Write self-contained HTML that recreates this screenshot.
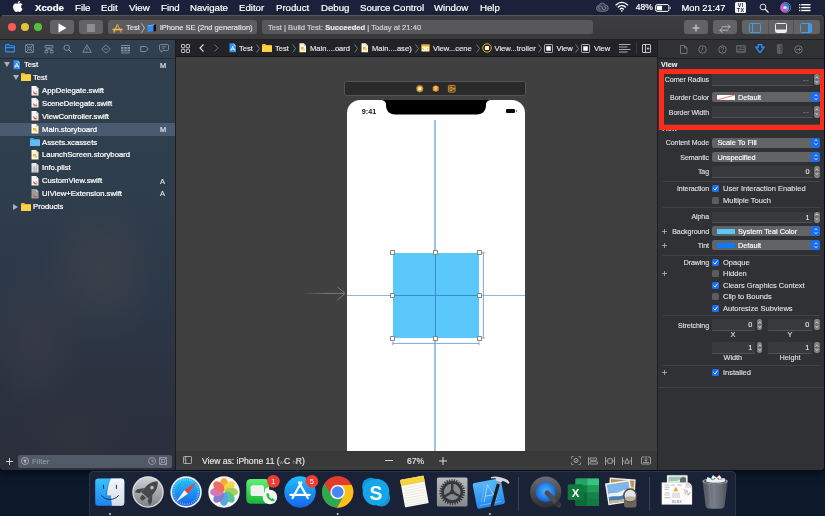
<!DOCTYPE html>
<html lang="en">
<head>
<meta charset="utf-8">
<title>Xcode - Main.storyboard</title>
<style>
*{box-sizing:border-box;margin:0;padding:0}
html,body{width:825px;height:516px;overflow:hidden;background:#0e1626}
body{font-family:"Liberation Sans",sans-serif;color:#e6e6e6;position:relative;-webkit-font-smoothing:antialiased}
.abs{position:absolute}
.t{position:absolute;white-space:nowrap;line-height:1}
svg{position:absolute;overflow:visible}

/* ---------- desktop ---------- */
#desktop{left:0;top:0;width:825px;height:516px;background:#0b192b}

/* ---------- menu bar ---------- */
#menubar{z-index:5;will-change:transform;left:0;top:0;width:825px;height:15px;background:#1b2138}
#menubar .t{top:2.700px;font-size:9.7px;color:#fff;letter-spacing:-.04px;-webkit-text-stroke:.2px #fff}
#menubar .b{font-weight:bold}

/* ---------- window ---------- */
#win{will-change:transform;left:0;top:15px;width:824.300px;height:454.500px;background:#3b3b3c;border-radius:4px 4px 4px 4px;overflow:hidden;box-shadow:0 2px 9px 2px rgba(0,0,0,.55)}
#toolbar{z-index:2;left:0;top:0;width:825px;height:24.500px;background:linear-gradient(180deg,#3e3e40 0%,#38383a 100%);border-top:1px solid #555557;border-bottom:1px solid #1f1f21}
.tbtn{position:absolute;top:4.200px;height:14.200px;border-radius:3px;background:#636365}
.tfield{position:absolute;top:4.200px;height:14.200px;border-radius:3px;background:#5a5a5c}
#toolbar .t{font-size:7.6px;color:#e6e6e6;top:8px;-webkit-text-stroke:.15px #e6e6e6}

/* ---------- navigator ---------- */
#nav{left:0;top:24px;width:175px;height:431px;background:
 radial-gradient(ellipse 62px 78px at 102px 229px,rgba(62,66,74,.8),rgba(62,66,74,0) 100%),
 radial-gradient(ellipse 52px 80px at 35px 295px,rgba(58,61,70,.7),rgba(58,61,70,0) 100%),
 radial-gradient(ellipse 60px 50px at 75px 395px,rgba(52,55,64,.5),rgba(52,55,64,0) 100%),
 linear-gradient(180deg,#30404f 0%,#2f3e4d 30%,#2c3848 60%,#2b313e 85%,#2a2f3b 100%)}
#nav .row{position:absolute;left:0;width:175px;height:13px}
#nav .t{font-size:7.7px;color:#fff;-webkit-text-stroke:.22px #fff}
#nav .st{font-size:7.4px;color:#dde0e5;left:160px;-webkit-text-stroke:.2px #dde0e5}
#navsel{left:0;top:84px;width:175px;height:13px;background:#4a5a70}

/* ---------- editor ---------- */
#div1{left:175px;top:24px;width:1px;height:431px;background:#1d1d1f}
#jump{left:176px;top:24px;width:481px;height:18px;background:#222326;border-bottom:1px solid #19191b}
#jump .t{font-size:7.6px;color:#e6e6e6;top:5.700px;-webkit-text-stroke:.15px #e6e6e6}
#canvas{left:176px;top:42px;width:481px;height:394px;background:#404040;overflow:hidden}
#cbar{left:176px;top:436px;width:481px;height:19.500px;background:#3a3a3b;border-top:1px solid #383839}
#cbar .t{font-size:8.550px;color:#e8e8e8;top:4.500px;-webkit-text-stroke:.15px #e8e8e8}

.hd{position:absolute;width:5px;height:5px;background:#fff;border:.7px solid #858585;border-radius:.8px}
/* ---------- inspector ---------- */
#div2{left:656.500px;top:24px;width:1.500px;height:431px;background:#1d1d1f}
#insp{left:658px;top:24px;width:167px;height:431px;background:#303134}
#insp .t{font-size:7.3px;color:#e4e4e4;-webkit-text-stroke:.1px #e4e4e4}
#insp .lab{text-align:right;width:100px;left:-49px;font-size:7px;letter-spacing:-.06px}
.sep{position:absolute;left:5px;width:157px;height:1px;background:#434447}
.fld{position:absolute;height:11.500px;background:#393a3d;border-bottom:1px solid #505154;border-radius:1px}
.stp{position:absolute;width:5.400px;height:11.300px;border-radius:2.700px;margin-left:.3px;background:linear-gradient(180deg,#8a8a8d 0%,#6c6c6f 50%,#8a8a8d 100%)}
.pop{position:absolute;left:54px;width:108px;height:10px;border-radius:2.5px;background:#626365;overflow:hidden}
.pop i{position:absolute;right:0;top:0;width:9px;height:10px;background:#1a6cf0}
.pop b{position:absolute;left:5px;top:2.5px;width:18px;height:5px}
.pop span{position:absolute;left:26px;top:1.5px;font-size:7.3px;color:#fff;white-space:nowrap;line-height:1;-webkit-text-stroke:.15px #fff}
.cb{position:absolute;left:54px;width:7px;height:7px;border-radius:1.5px;background:#5c5d60}
.cb.on{background:#1a6cf0}
#insp .cb + .t{font-size:7.500px}

/* ---------- dock ---------- */
#dock{left:88.500px;top:470.500px;width:647px;height:50px;background:#1a2237;border-radius:4px 4px 0 0;border:1px solid #2b3349}
</style>
</head>
<body>
<div id="desktop" class="abs"></div>

<!-- ================= MENU BAR ================= -->
<div id="menubar" class="abs">
 <svg style="left:12.500px;top:1px" width="9.500" height="11" viewBox="0 0 170 200"><path fill="#fff" d="M150.4 155.9c-3 7-6.600 13.400-10.800 19.300-5.700 8.100-10.300 13.700-13.900 16.800-5.600 5.100-11.500 7.700-17.900 7.900-4.600 0-10.100-1.300-16.500-3.900-6.400-2.600-12.300-3.900-17.700-3.900-5.700 0-11.800 1.300-18.300 3.900-6.500 2.600-11.800 4-15.800 4.100-6.100 0.300-12.200-2.400-18.300-8.100-3.900-3.400-8.700-9.200-14.500-17.400C0.500 165.700-4.600 155.200-8.600 143.200-12.900 130.200-15 117.700-15 105.500c0-13.900 3-25.900 9-36 4.700-8.100 11-14.400 18.900-19.100 7.900-4.700 16.400-7 25.500-7.200 5 0 11.600 1.500 19.800 4.600 8.100 3 13.400 4.600 15.600 4.600 1.700 0 7.500-1.800 17.300-5.400 9.300-3.300 17.100-4.700 23.500-4.200 17.400 1.400 30.400 8.200 39.100 20.600-15.500 9.400-23.200 22.600-23.100 39.500 0.100 13.200 4.900 24.100 14.300 32.800 4.200 4 9 7.100 14.200 9.300-1.100 3.300-2.300 6.400-3.600 9.400zM110.600 4c0 10.300-3.800 20-11.300 28.800-9.100 10.600-20 16.700-31.900 15.700-0.200-1.200-0.200-2.500-0.200-3.900 0-9.900 4.300-20.500 12-29.200 3.800-4.400 8.700-8 14.600-10.900 5.900-2.900 11.500-4.400 16.700-4.700 0.200 1.400 0.200 2.800 0.200 4.100z" transform="translate(15 0)"/></svg>
 <span class="t b" style="left:35px">Xcode</span>
 <span class="t" style="left:75px">File</span>
 <span class="t" style="left:101px">Edit</span>
 <span class="t" style="left:129px">View</span>
 <span class="t" style="left:161px">Find</span>
 <span class="t" style="left:190px">Navigate</span>
 <span class="t" style="left:239px">Editor</span>
 <span class="t" style="left:276px">Product</span>
 <span class="t" style="left:321px">Debug</span>
 <span class="t" style="left:360px">Source Control</span>
 <span class="t" style="left:434px">Window</span>
 <span class="t" style="left:480px">Help</span>
 <!-- right status items -->
 <svg style="left:596px;top:3.300px" width="12.500" height="9" viewBox="0 0 25 18"><path d="M7 16.500a6 6 0 0 1-1-11.900 7 7 0 0 1 12.500-1 6.500 6.500 0 0 1 .5 12.900z" fill="#3a3f55" stroke="#7a7e90" stroke-width="1.800"/><path d="M8.500 13a3.500 3.500 0 1 1 3-5.500M16 6.500a3.500 3.500 0 1 1-3 5.500M11.500 7.500c1.500 1.500 1.500 3.500 1.500 4.500" fill="none" stroke="#8b8fa0" stroke-width="1.600"/></svg>
 <svg style="left:614.800px;top:1.400px" width="13.600" height="10.800" viewBox="0 0 27.200 21.600"><g fill="none" stroke="#fff" stroke-width="2.700" stroke-linecap="round"><path d="M2 7.800c6.700-6.700 16.500-6.700 23.200 0"/><path d="M6.300 12.200c4.300-4.300 10.300-4.300 14.600 0"/><path d="M10.300 16.300c2-2 4.600-2 6.600 0"/></g><circle cx="13.600" cy="19.600" r="1.700" fill="#fff"/></svg>
 <span class="t" style="left:635.800px;font-size:8.500px;top:3.300px">48%</span>
 <svg style="left:654.600px;top:3.500px" width="16.500" height="8" viewBox="0 0 33 16"><rect x="1.200" y="1.200" width="26.600" height="13.600" rx="3.200" fill="none" stroke="#fff" stroke-width="2"/><rect x="3.600" y="3.600" width="10.500" height="8.800" rx="1" fill="#fff"/><path d="M29.800 5.500v5c2.300-.5 2.300-4.500 0-5z" fill="#fff"/></svg>
 <span class="t" style="left:681.500px;font-size:9.400px;top:2.900px">Mon 21:47</span>
 <div class="abs" style="left:735.300px;top:2px;width:10.600px;height:10.600px;background:#f4f4f6;border-radius:1.600px"></div>
 <span class="t" style="left:735.300px;width:10.600px;text-align:center;top:3px;font-size:5.400px;font-weight:bold;color:#1b2138;line-height:4.500px;letter-spacing:.3px;-webkit-text-stroke:0;white-space:normal">VI TX</span>
 <svg style="left:759px;top:2.500px" width="10" height="10" viewBox="0 0 20 20"><circle cx="8" cy="8" r="5.800" fill="none" stroke="#fff" stroke-width="1.700"/><path d="M12.500 12.500l6 6" stroke="#fff" stroke-width="2.200" stroke-linecap="round"/></svg>
 <div class="abs" style="left:779.500px;top:1.800px;width:11.400px;height:11.400px;border-radius:50%;background:#23233a;border:.7px solid #7c7f9a"></div><div class="abs" style="left:781px;top:3.300px;width:8.400px;height:8.400px;border-radius:50%;background:conic-gradient(from 200deg,#e93ec0,#f06ad0 15%,#8a5cf5 35%,#2f7cf6 55%,#26c6e8 75%,#c94fe0 92%,#e93ec0)"></div><div class="abs" style="left:783.400px;top:5.700px;width:3.600px;height:3.600px;border-radius:50%;background:radial-gradient(circle,#fff 0,rgba(255,255,255,.6) 50%,rgba(255,255,255,0) 100%)"></div>
 <svg style="left:798.500px;top:3.800px" width="11.500" height="7.400" viewBox="0 0 23 14.800"><g fill="#fff"><rect x="0" y="0" width="2.600" height="2.800"/><rect x="4.500" y="0" width="18.500" height="2.800"/><rect x="0" y="5.800" width="2.600" height="2.800"/><rect x="4.500" y="5.800" width="18.500" height="2.800"/><rect x="0" y="11.600" width="2.600" height="2.800"/><rect x="4.500" y="11.600" width="18.500" height="2.800"/></g></svg>
</div>

<!-- ================= XCODE WINDOW ================= -->
<div id="win" class="abs">
 <div id="toolbar" class="abs">
  <div class="abs" style="left:8.100px;top:7.300px;width:8px;height:8px;border-radius:50%;background:#fc5b57"></div>
  <div class="abs" style="left:21px;top:7.300px;width:8px;height:8px;border-radius:50%;background:#e5bf3c"></div>
  <div class="abs" style="left:34px;top:7.300px;width:8px;height:8px;border-radius:50%;background:#57c038"></div>
  <div class="tbtn" style="left:50px;width:24px"></div>
  <svg style="left:58px;top:7px" width="9" height="10" viewBox="0 0 9 10"><path d="M0.500 0.500L8.500 5L0.500 9.500z" fill="#fff"/></svg>
  <div class="tbtn" style="left:79px;width:24px"></div>
  <div class="abs" style="left:87px;top:8px;width:8px;height:8px;background:#8e8e90"></div>
  <div class="tfield" style="left:108px;width:149px;background:#5d5d5f"></div>
  <!-- app icon -->
  <svg style="left:112px;top:6.500px" width="11" height="11" viewBox="0 0 22 22"><g fill="none" stroke-linecap="round"><path d="M11 3L4 18" stroke="#e8a86a" stroke-width="2.600"/><path d="M11 3L18 18" stroke="#d98a4a" stroke-width="2.600"/><path d="M2 13h18" stroke="#f0c63a" stroke-width="2.800"/></g></svg>
  <span class="t" style="left:126px">Test</span>
  <svg style="left:141px;top:7px" width="4" height="10" viewBox="0 0 4 10"><path d="M0.500 0.500L3.500 5L0.500 9.500" fill="none" stroke="#d0d0d0" stroke-width=".8"/></svg>
  <!-- device icon -->
  <svg style="left:147px;top:7px" width="10" height="10" viewBox="0 0 20 20"><path d="M1 5l13-2v13l-13 2z" fill="#2f8df5"/><path d="M1 5l13-2 2 1-13 2z" fill="#7cc0ff"/><path d="M13 4l5-1v13l-5 1z" fill="#0d0d10"/></svg>
  <span class="t" style="left:160px;font-size:7.500px">iPhone SE (2nd generation)</span>
  <div class="tfield" style="left:262px;width:331px;background:#58585a"></div>
  <span class="t" style="left:268px;color:#c9c9c9">Test | Build Test: <b style="color:#f0f0f0">Succeeded</b> | Today at 21:40</span>
  <div class="tbtn" style="left:684px;width:24px"></div>
  <svg style="left:692px;top:8px" width="8" height="8" viewBox="0 0 8 8"><path d="M4 0.500v7M0.500 4h7" stroke="#e4e4e4" stroke-width="1" fill="none"/></svg>
  <div class="tbtn" style="left:713px;width:24px"></div>
  <svg style="left:719px;top:7.500px" width="12" height="9" viewBox="0 0 24 18"><g fill="none" stroke="#dadada" stroke-width="1.300" stroke-linecap="round" stroke-linejoin="round"><path d="M6 5.500h16M18 1.500l4 4-4 4"/><path d="M18 12.500H2M6 8.500l-4 4 4 4"/></g></svg>
  <div class="tbtn" style="left:742px;width:78px"></div>
  <div class="abs" style="left:767.5px;top:4.200px;width:1px;height:14.200px;background:#525254"></div>
  <div class="abs" style="left:793px;top:4.200px;width:1px;height:14.200px;background:#525254"></div>
  <svg style="left:749px;top:7px" width="12" height="10" viewBox="0 0 12 10"><rect x=".5" y=".5" width="11" height="9" rx="1" fill="none" stroke="#3aa0f5" stroke-width="1"/><path d="M3.500 .5v9" stroke="#3aa0f5" stroke-width="1"/></svg>
  <svg style="left:774.5px;top:7px" width="12" height="10" viewBox="0 0 12 10"><rect x=".5" y=".5" width="11" height="9" rx="1" fill="none" stroke="#ececec" stroke-width="1"/><rect x="1" y="6.500" width="10" height="2.500" fill="#ececec"/></svg>
  <svg style="left:800px;top:7px" width="12" height="10" viewBox="0 0 12 10"><rect x=".5" y=".5" width="11" height="9" rx="1" fill="none" stroke="#3aa0f5" stroke-width="1"/><path d="M8.500 .5v9" stroke="#3aa0f5" stroke-width="1"/><rect x="9" y="1" width="2.500" height="8" fill="#3aa0f5" opacity=".9"/></svg>
 </div>
 <div id="nav" class="abs">

  <!-- navigator tabs -->
  <svg style="left:4.800px;top:5.300px" width="10" height="8.600" viewBox="0 0 20 17.200"><path d="M1.300 2.500a1.200 1.200 0 0 1 1.200-1.200h5l1.800 2.200h8.200a1.200 1.200 0 0 1 1.200 1.200v10a1.200 1.200 0 0 1-1.200 1.200h-15a1.200 1.200 0 0 1-1.200-1.200z" fill="none" stroke="#2d8ef7" stroke-width="2.300"/><path d="M1.300 7.300h17.400" stroke="#2d8ef7" stroke-width="2.200"/></svg>
  <svg style="left:24.500px;top:5.200px" width="9" height="9" viewBox="0 0 18 18"><g fill="none" stroke="#8e99a6" stroke-width="1.500"><rect x="1" y="1" width="16" height="16" rx="1.500"/><rect x="6.200" y="6.200" width="5.600" height="5.600"/><path d="M1.500 1.500l4.700 4.700M16.500 1.500l-4.700 4.700M1.500 16.500l4.700-4.700M16.500 16.500l-4.700-4.700"/></g></svg>
  <svg style="left:43.500px;top:5.500px" width="10" height="8.400" viewBox="0 0 20 16.800"><g fill="none" stroke="#8e99a6" stroke-width="1.600"><rect x="2" y="1" width="16" height="4.800" rx=".6"/><rect x="2" y="11" width="5.400" height="4.800" rx=".4"/><rect x="12.600" y="11" width="5.400" height="4.800" rx=".4"/><path d="M4.700 11V8.300h10.600V11M10 5.800v2.500"/></g></svg>
  <svg style="left:62.500px;top:5.2px" width="9" height="9" viewBox="0 0 18 18"><circle cx="7.500" cy="7.500" r="5.500" fill="none" stroke="#8e99a6" stroke-width="1.700"/><path d="M11.500 11.500l5 5" stroke="#8e99a6" stroke-width="2" stroke-linecap="round"/></svg>
  <svg style="left:82px;top:5.2px" width="10" height="9" viewBox="0 0 20 18"><path d="M10 1.500L18.500 16.500h-17z" fill="none" stroke="#8e99a6" stroke-width="1.600" stroke-linejoin="round"/><path d="M10 7v5" stroke="#8e99a6" stroke-width="1.600"/><circle cx="10" cy="14" r="1" fill="#8e99a6"/></svg>
  <svg style="left:101px;top:4.7px" width="10" height="10" viewBox="0 0 20 20"><path d="M10 1.500L18.500 10 10 18.500 1.500 10z" fill="none" stroke="#8e99a6" stroke-width="1.600" stroke-linejoin="round"/><path d="M7 10h6" stroke="#8e99a6" stroke-width="1.600"/></svg>
  <svg style="left:120.500px;top:5.5px" width="9" height="8.500" viewBox="0 0 18 17"><g fill="#8e99a6"><rect x="0" y="0.300" width="18" height="1.700"/><rect x="0" y="4" width="5" height="3.600"/><rect x="6.500" y="4" width="5" height="3.600"/><rect x="13" y="4" width="5" height="3.600"/><rect x="0" y="9.200" width="5" height="3.600"/><rect x="6.500" y="9.200" width="5" height="3.600"/><rect x="13" y="9.200" width="5" height="3.600"/><rect x="0" y="15" width="18" height="1.700"/></g></svg>
  <svg style="left:140px;top:6.7px" width="9" height="6" viewBox="0 0 18 12"><path d="M1.500 1h10.500l4.500 5-4.500 5h-10.500z" fill="none" stroke="#8e99a6" stroke-width="1.700" stroke-linejoin="round"/></svg>
  <svg style="left:159px;top:5.2px" width="10" height="9" viewBox="0 0 20 18"><path d="M3 1h14a2 2 0 0 1 2 2v8a2 2 0 0 1-2 2h-9l-3.500 3.500v-3.500h-1.500a2 2 0 0 1-2-2v-8a2 2 0 0 1 2-2z" fill="none" stroke="#8e99a6" stroke-width="1.600" stroke-linejoin="round"/><path d="M5.500 5.500h9M5.500 8.500h6" stroke="#8e99a6" stroke-width="1.400"/></svg>
  <div class="abs" style="left:0;top:18.500px;width:175px;height:1px;background:rgba(20,26,34,.5)"></div>
  <div id="navsel" class="abs"></div>
  <svg style="left:3.5px;top:23.1px" width="6" height="5" viewBox="0 0 6 5"><path d="M0 0h6L3 5z" fill="#a9b0ba"/></svg>
  <svg style="left:13px;top:20.8px" width="7.500" height="9.500" viewBox="0 0 16 19"><path d="M1 0h9l5 5v14H1z" fill="#2f8ff5"/><path d="M10 0l5 5h-5z" fill="#9fd0ff"/><path d="M8 7l-3.500 8M8 7l3.500 8M4 12.500h8" stroke="#fff" stroke-width="1.600" fill="none" stroke-linecap="round"/></svg>
  <span class="t" style="left:24px;top:22.4px">Test</span>
  <span class="t st" style="top:22.6px">M</span>
  <svg style="left:12.5px;top:36.0px" width="6" height="5" viewBox="0 0 6 5"><path d="M0 0h6L3 5z" fill="#a9b0ba"/></svg>
  <svg style="left:20.5px;top:34.3px" width="10" height="8" viewBox="0 0 20 16"><path d="M0 1.500a1.500 1.500 0 0 1 1.500-1.500h5l2 2h10a1.500 1.500 0 0 1 1.500 1.500v11a1.500 1.500 0 0 1-1.500 1.500h-17a1.500 1.500 0 0 1-1.500-1.500z" fill="#f2b92b"/><rect x="0" y="4" width="20" height="12" rx="1.500" fill="#fbd244"/></svg>
  <span class="t" style="left:33px;top:35.3px">Test</span>
  <svg style="left:30.5px;top:46.5px" width="8" height="9.500" viewBox="0 0 16 19"><path d="M1 0h9l5 5v14H1z" fill="#f7f7f7"/><path d="M10 0l5 5h-5z" fill="#c9c9c9"/><path d="M4 9c2 3 5 5 8 6-1 1.500-4 2-7 .5 3 0 4-.5 4-.5C7 14 5 12 4 9z M8 9c2 1 4 3.500 4.500 7 .5-2 0-5-4.500-7z" fill="#e8432e"/><path d="M4.500 10.500c3 3.500 7 5 8.500 5.500-2 1.500-6 1-8-1.500z" fill="#f05138"/></svg>
  <span class="t" style="left:42px;top:48.3px">AppDelegate.swift</span>
  <svg style="left:30.5px;top:59.4px" width="8" height="9.500" viewBox="0 0 16 19"><path d="M1 0h9l5 5v14H1z" fill="#f7f7f7"/><path d="M10 0l5 5h-5z" fill="#c9c9c9"/><path d="M4 9c2 3 5 5 8 6-1 1.500-4 2-7 .5 3 0 4-.5 4-.5C7 14 5 12 4 9z M8 9c2 1 4 3.500 4.500 7 .5-2 0-5-4.500-7z" fill="#e8432e"/><path d="M4.500 10.500c3 3.500 7 5 8.500 5.500-2 1.500-6 1-8-1.500z" fill="#f05138"/></svg>
  <span class="t" style="left:42px;top:61.2px">SceneDelegate.swift</span>
  <svg style="left:30.5px;top:72.3px" width="8" height="9.500" viewBox="0 0 16 19"><path d="M1 0h9l5 5v14H1z" fill="#f7f7f7"/><path d="M10 0l5 5h-5z" fill="#c9c9c9"/><path d="M4 9c2 3 5 5 8 6-1 1.500-4 2-7 .5 3 0 4-.5 4-.5C7 14 5 12 4 9z M8 9c2 1 4 3.500 4.500 7 .5-2 0-5-4.500-7z" fill="#e8432e"/><path d="M4.500 10.500c3 3.500 7 5 8.500 5.500-2 1.500-6 1-8-1.500z" fill="#f05138"/></svg>
  <span class="t" style="left:42px;top:74.1px">ViewController.swift</span>
  <svg style="left:30.5px;top:85.2px" width="8" height="9.500" viewBox="0 0 16 19"><path d="M1 0h9l5 5v14H1z" fill="#fbf6e6"/><path d="M10 0l5 5h-5z" fill="#d9c98f"/><rect x="4" y="8" width="6" height="5" rx="1" fill="#e9b62c"/><rect x="7.500" y="11" width="5" height="4.500" rx="1" fill="#f5cf4f"/></svg>
  <span class="t" style="left:42px;top:87.0px">Main.storyboard</span>
  <span class="t st" style="top:87.2px">M</span>
  <svg style="left:29.5px;top:99.0px" width="10" height="8" viewBox="0 0 20 16"><path d="M0 1.500a1.500 1.500 0 0 1 1.500-1.500h5l2 2h10a1.500 1.500 0 0 1 1.500 1.500v11a1.500 1.500 0 0 1-1.500 1.500h-17a1.500 1.500 0 0 1-1.500-1.500z" fill="#3b9fe8"/><rect x="0" y="4" width="20" height="12" rx="1.500" fill="#62bdf7"/></svg>
  <span class="t" style="left:42px;top:99.55px">Assets.xcassets</span>
  <svg style="left:30.5px;top:111.1px" width="8" height="9.500" viewBox="0 0 16 19"><path d="M1 0h9l5 5v14H1z" fill="#fbf6e6"/><path d="M10 0l5 5h-5z" fill="#d9c98f"/><rect x="4" y="8" width="6" height="5" rx="1" fill="#e9b62c"/><rect x="7.500" y="11" width="5" height="4.500" rx="1" fill="#f5cf4f"/></svg>
  <span class="t" style="left:42px;top:112.45px">LaunchScreen.storyboard</span>
  <svg style="left:30.5px;top:124.0px" width="8" height="9.500" viewBox="0 0 16 19"><path d="M1 0h9l5 5v14H1z" fill="#e6e6e6"/><path d="M10 0l5 5h-5z" fill="#b9b9b9"/><path d="M3 8h10M3 11h10M3 14h10M3 17h10M6.500 7v11M10 7v11" stroke="#a5a5a5" stroke-width="1" fill="none"/></svg>
  <span class="t" style="left:42px;top:125.35px">Info.plist</span>
  <svg style="left:30.5px;top:137.0px" width="8" height="9.500" viewBox="0 0 16 19"><path d="M1 0h9l5 5v14H1z" fill="#f7f7f7"/><path d="M10 0l5 5h-5z" fill="#c9c9c9"/><path d="M4 9c2 3 5 5 8 6-1 1.500-4 2-7 .5 3 0 4-.5 4-.5C7 14 5 12 4 9z M8 9c2 1 4 3.500 4.500 7 .5-2 0-5-4.500-7z" fill="#e8432e"/><path d="M4.500 10.500c3 3.500 7 5 8.500 5.500-2 1.500-6 1-8-1.500z" fill="#f05138"/></svg>
  <span class="t" style="left:42px;top:138.35px">CustomView.swift</span>
  <span class="t st" style="top:138.55px">A</span>
  <svg style="left:30.5px;top:149.9px" width="8" height="9.500" viewBox="0 0 16 19"><path d="M1 0h9l5 5v14H1z" fill="#9c9c9c"/><path d="M10 0l5 5h-5z" fill="#c9c9c9"/><path d="M4.500 10.500c3 3.500 7 5 8.500 5.500-2 1.500-6 1-8-1.500z" fill="#e8432e"/></svg>
  <span class="t" style="left:42px;top:151.25px">UIView+Extension.swift</span>
  <span class="t st" style="top:151.45px">A</span>
  <svg style="left:13px;top:164.8px" width="5" height="6" viewBox="0 0 5 6"><path d="M0 0v6L5 3z" fill="#a9b0ba"/></svg>
  <svg style="left:20.5px;top:163.6px" width="10" height="8" viewBox="0 0 20 16"><path d="M0 1.500a1.500 1.500 0 0 1 1.500-1.500h5l2 2h10a1.500 1.500 0 0 1 1.500 1.500v11a1.500 1.500 0 0 1-1.500 1.500h-17a1.500 1.500 0 0 1-1.500-1.500z" fill="#f2b92b"/><rect x="0" y="4" width="20" height="12" rx="1.500" fill="#fbd244"/></svg>
  <span class="t" style="left:33px;top:164.15px">Products</span>
  <svg style="left:5.500px;top:419px" width="7" height="7" viewBox="0 0 7 7"><path d="M3.500 0v7M0 3.500h7" stroke="#e0e0e0" stroke-width=".9" fill="none"/></svg>
  <div class="abs" style="left:18px;top:415.500px;width:153.500px;height:13px;border-radius:2.500px;background:#535a67"></div>
  <svg style="left:21px;top:418px" width="8" height="8" viewBox="0 0 16 16"><circle cx="8" cy="8" r="7" fill="none" stroke="#c3c8d0" stroke-width="1.400"/><path d="M4 5.500h8L9 9v3.500l-2-1V9z" fill="#c3c8d0"/></svg>
  <span class="t" style="left:32px;top:418.500px;color:#98a0ac;font-size:7.800px;-webkit-text-stroke:0">Filter</span>
  <svg style="left:148px;top:418px" width="8" height="8" viewBox="0 0 16 16"><circle cx="8" cy="8" r="7" fill="none" stroke="#aab1bc" stroke-width="1.400"/><path d="M8 4v4.500h3.500" fill="none" stroke="#aab1bc" stroke-width="1.400"/></svg>
  <svg style="left:159px;top:418px" width="8" height="8" viewBox="0 0 16 16"><g fill="none" stroke="#aab1bc" stroke-width="1.400"><rect x="1" y="1" width="14" height="14" rx="1"/><rect x="5" y="5" width="6" height="6"/><path d="M1 1l4 4M15 1l-4 4M1 15l4-4M15 15l-4-4"/></g></svg>
 </div>
 <div id="div1" class="abs"></div>
 <div id="jump" class="abs">
  <svg style="left:4.500px;top:4.500px" width="9" height="9" viewBox="0 0 18 18"><g fill="none" stroke="#e2e2e2" stroke-width="1.700"><rect x="1" y="1" width="6.500" height="6.500" rx="1.200"/><rect x="10.500" y="1" width="6.500" height="6.500" rx="1.200"/><rect x="1" y="10.500" width="6.500" height="6.500" rx="1.200"/><rect x="10.500" y="10.500" width="6.500" height="6.500" rx="1.200"/></g></svg>
  <svg style="left:22.500px;top:5px" width="5" height="8" viewBox="0 0 5 8"><path d="M4.500 0.500L1 4l3.500 3.500" fill="none" stroke="#f0f0f0" stroke-width="1.100"/></svg>
  <svg style="left:37.500px;top:5px" width="5" height="8" viewBox="0 0 5 8"><path d="M0.500 0.500L4 4 0.500 7.500" fill="none" stroke="#6e6e70" stroke-width="1"/></svg>
  <svg style="left:52.5px;top:4.200px" width="7.500" height="9.500" viewBox="0 0 16 19"><path d="M1 0h9l5 5v14H1z" fill="#2f8ff5"/><path d="M10 0l5 5h-5z" fill="#9fd0ff"/><path d="M8 7l-3.500 8M8 7l3.500 8M4 12.500h8" stroke="#fff" stroke-width="1.600" fill="none" stroke-linecap="round"/></svg>
  <span class="t" style="left:63px">Test</span>
  <svg style="left:79.5px;top:4.500px" width="4" height="9" viewBox="0 0 4 9"><path d="M0.500 0.500L3.500 4.500L0.500 8.500" fill="none" stroke="#8c8c8e" stroke-width=".8"/></svg>
  <svg style="left:86px;top:5.200px" width="10" height="8" viewBox="0 0 20 16"><path d="M0 1.500a1.500 1.500 0 0 1 1.500-1.500h5l2 2h10a1.500 1.500 0 0 1 1.500 1.500v11a1.500 1.500 0 0 1-1.500 1.500h-17a1.500 1.500 0 0 1-1.500-1.500z" fill="#f2b92b"/><rect x="0" y="4" width="20" height="12" rx="1.500" fill="#fbd244"/></svg>
  <span class="t" style="left:99px">Test</span>
  <svg style="left:115.5px;top:4.500px" width="4" height="9" viewBox="0 0 4 9"><path d="M0.500 0.500L3.500 4.500L0.500 8.500" fill="none" stroke="#8c8c8e" stroke-width=".8"/></svg>
  <svg style="left:123px;top:4.200px" width="7.500" height="9.500" viewBox="0 0 16 19"><path d="M1 0h9l5 5v14H1z" fill="#fbf6e6"/><path d="M10 0l5 5h-5z" fill="#d9c98f"/><rect x="4" y="8" width="6" height="5" rx="1" fill="#e9b62c"/><rect x="7.500" y="11" width="5" height="4.500" rx="1" fill="#f5cf4f"/></svg>
  <span class="t" style="left:134px">Main....oard</span>
  <svg style="left:177.5px;top:4.500px" width="4" height="9" viewBox="0 0 4 9"><path d="M0.500 0.500L3.500 4.500L0.500 8.500" fill="none" stroke="#8c8c8e" stroke-width=".8"/></svg>
  <svg style="left:184.5px;top:4.200px" width="7.500" height="9.500" viewBox="0 0 16 19"><path d="M1 0h9l5 5v14H1z" fill="#fbf6e6"/><path d="M10 0l5 5h-5z" fill="#d9c98f"/><rect x="4" y="8" width="6" height="5" rx="1" fill="#e9b62c"/><rect x="7.500" y="11" width="5" height="4.500" rx="1" fill="#f5cf4f"/></svg>
  <span class="t" style="left:196px">Main....ase)</span>
  <svg style="left:238.5px;top:4.500px" width="4" height="9" viewBox="0 0 4 9"><path d="M0.500 0.500L3.500 4.500L0.500 8.500" fill="none" stroke="#8c8c8e" stroke-width=".8"/></svg>
  <svg style="left:245px;top:5px" width="9" height="8" viewBox="0 0 18 16"><rect x=".5" y=".5" width="17" height="15" rx="2" fill="#e8b030"/><rect x="2" y="5" width="14" height="9" rx="1" fill="#fdf6dc"/><path d="M6 7.500L4 9.500l2 2M12 7.500l2 2-2 2" stroke="#b07a10" stroke-width="1.200" fill="none"/></svg>
  <span class="t" style="left:257px">View...cene</span>
  <svg style="left:299.5px;top:4.500px" width="4" height="9" viewBox="0 0 4 9"><path d="M0.500 0.500L3.500 4.500L0.500 8.500" fill="none" stroke="#8c8c8e" stroke-width=".8"/></svg>
  <svg style="left:306px;top:4px" width="10" height="10" viewBox="0 0 20 20"><circle cx="10" cy="10" r="8.500" fill="#2b2413" stroke="#e6ad2c" stroke-width="2"/><rect x="6" y="6" width="8" height="8" rx="1" fill="#fdf8e8"/></svg>
  <span class="t" style="left:318.500px">View...troller</span>
  <svg style="left:361.5px;top:4.500px" width="4" height="9" viewBox="0 0 4 9"><path d="M0.500 0.500L3.500 4.500L0.500 8.500" fill="none" stroke="#8c8c8e" stroke-width=".8"/></svg>
  <svg style="left:367.500px;top:4.500px" width="9" height="9" viewBox="0 0 18 18"><rect x="1" y="1" width="16" height="16" rx="1.500" fill="none" stroke="#d8d8d8" stroke-width="1.500"/><rect x="4.500" y="4.500" width="9" height="9" fill="#fff"/></svg>
  <span class="t" style="left:380.500px">View</span>
  <svg style="left:399px;top:4.500px" width="4" height="9" viewBox="0 0 4 9"><path d="M0.500 0.500L3.500 4.500L0.500 8.500" fill="none" stroke="#8c8c8e" stroke-width=".8"/></svg>
  <svg style="left:405px;top:4.500px" width="9" height="9" viewBox="0 0 18 18"><rect x="1" y="1" width="16" height="16" rx="1.500" fill="none" stroke="#d8d8d8" stroke-width="1.500"/><rect x="4.500" y="4.500" width="9" height="9" fill="#fff"/></svg>
  <span class="t" style="left:418px">View</span>
  <svg style="left:442.700px;top:5.300px" width="11.500" height="8.600" viewBox="0 0 23 17.200"><path d="M0 1h23M0 6h17M0 11h23M0 16h17" stroke="#bdbdbf" stroke-width="1.800"/></svg>
  <div class="abs" style="left:460px;top:3px;width:1px;height:12px;background:#3b3b3e"></div>
  <svg style="left:466px;top:4.500px" width="9" height="9" viewBox="0 0 18 18"><rect x="1" y="1" width="16" height="16" rx="1" fill="none" stroke="#e2e2e2" stroke-width="1.700"/><path d="M7 1v16" stroke="#e2e2e2" stroke-width="1.700"/><path d="M10 9h5M13 6.500l-3 2.500 3 2.500" fill="none" stroke="#e2e2e2" stroke-width="1.500"/></svg>
 </div>
 <div id="canvas" class="abs">
  <!-- scene dock strip -->
  <div class="abs" style="left:168.300px;top:24px;width:181.700px;height:15px;background:#2a2a2b;border:1px solid #545455;border-radius:2.500px"></div>
  <svg style="left:240px;top:28px" width="7.500" height="7.500" viewBox="0 0 15 15"><circle cx="7.500" cy="7.500" r="6.800" fill="#d9a12f" stroke="#8a6a24" stroke-width="1"/><rect x="4.600" y="4.600" width="5.800" height="5.800" fill="#fffaf0"/></svg>
  <svg style="left:256px;top:28px" width="7.500" height="7.500" viewBox="0 0 15 15"><path d="M7.500 .8l6 3v7.400l-6 3-6-3V3.800z" fill="#e08a2c"/><path d="M7.500 .8l6 3-6 3-6-3z" fill="#f4b55c"/><path d="M5 6.500h4v4H5z" fill="#ffe2b0" opacity=".8"/></svg>
  <svg style="left:272px;top:28px" width="7.500" height="7.500" viewBox="0 0 15 15"><rect x=".8" y=".8" width="13.400" height="13.400" rx="1.500" fill="#5a3d10" stroke="#e39a2e" stroke-width="1.600"/><path d="M4 4h4v7H4zM9.500 7.500h3M11 5.500l2 2-2 2" fill="none" stroke="#ffd48a" stroke-width="1.300"/></svg>
  <!-- phone -->
  <div class="abs" style="left:171px;top:43px;width:178px;height:420px;background:#fff;border-radius:13px 13px 0 0"></div>
  <svg style="left:203.500px;top:43px" width="112" height="16" viewBox="0 0 112 16"><path d="M0 0h112c-4 0-6 1.500-6 5v.5c0 5-3.500 9-9 9h-82c-5.500 0-9-4-9-9V5c0-3.500-2-5-6-5z" fill="#000"/></svg>
  <span class="t" style="left:185.800px;top:50.600px;font-size:7.200px;font-weight:bold;color:#111;-webkit-text-stroke:0">9:41</span>
  <div class="abs" style="left:330px;top:52px;width:9px;height:4px;background:#0a0a0a;border-radius:1px"></div>
  <div class="abs" style="left:340px;top:53.200px;width:1px;height:1.600px;background:#777"></div>
  <!-- guides -->
  <div class="abs" style="left:258.200px;top:63px;width:1.500px;height:340px;background:#a0c1e4"></div>
  <div class="abs" style="left:171px;top:238px;width:178px;height:1px;background:#8db6e3"></div>
  <!-- the teal view -->
  <div class="abs" style="left:216.800px;top:195.500px;width:86.200px;height:85.500px;background:#5ac8fa"></div>
  <div class="abs" style="left:258.500px;top:195.500px;width:1px;height:85.500px;background:#3b8ccb"></div>
  <div class="abs" style="left:216.800px;top:238px;width:86.200px;height:1px;background:#3b8ccb"></div>
  <!-- dimension brackets -->
  <svg style="left:0;top:0" width="481" height="395" viewBox="0 0 481 395"><g fill="none" stroke="#6c9fd6" stroke-width=".9"><path d="M307.400 195.800V281M305.600 195.800h3.600M305.600 281h3.600"/><path d="M216.800 286.400h86.200M216.800 284.600v3.600M303 284.600v3.600"/></g>
   <defs><linearGradient id="ag" x1="0" x2="1" y1="0" y2="0"><stop offset="0" stop-color="#7a7a7a" stop-opacity="0"/><stop offset=".55" stop-color="#7a7a7a" stop-opacity=".9"/><stop offset="1" stop-color="#7e7e7e"/></linearGradient></defs>
   <rect x="126" y="235.900" width="43" height="1" fill="url(#ag)" stroke="none"/>
   <path d="M161.500 229.900l7.500 6.500-7.500 6.500" fill="none" stroke="#7c7c7c" stroke-width="1"/>
  </svg>
  <div class="hd" style="left:214.3px;top:193.0px"></div><div class="hd" style="left:256.8px;top:193.0px"></div><div class="hd" style="left:300.5px;top:193.0px"></div><div class="hd" style="left:214.3px;top:235.89999999999998px"></div><div class="hd" style="left:300.5px;top:235.89999999999998px"></div><div class="hd" style="left:214.3px;top:278.5px"></div><div class="hd" style="left:256.8px;top:278.5px"></div><div class="hd" style="left:300.5px;top:278.5px"></div>
 </div>
 <div id="cbar" class="abs">
  <svg style="left:6.500px;top:4px" width="9" height="8" viewBox="0 0 18 16"><rect x="1" y="1" width="16" height="14" rx="1.500" fill="none" stroke="#cfcfcf" stroke-width="1.500"/><path d="M5.500 1v14" stroke="#cfcfcf" stroke-width="1.500"/><path d="M2.500 4h1.500M2.500 7h1.500" stroke="#cfcfcf" stroke-width="1"/></svg>
  <span class="t" style="left:26px">View as: iPhone 11 (<span style="font-size:6px;color:#9a9a9a;-webkit-text-stroke:0">w</span>C <span style="font-size:6px;color:#9a9a9a;-webkit-text-stroke:0">h</span>R)</span>
  <div class="abs" style="left:209px;top:8px;width:8px;height:1px;background:#d4d4d4"></div>
  <span class="t" style="left:231px">67%</span>
  <svg style="left:263px;top:4.500px" width="8" height="8" viewBox="0 0 8 8"><path d="M4 0v8M0 4h8" stroke="#d8d8d8" stroke-width="1" fill="none"/></svg>
  <svg style="left:395px;top:4px" width="10" height="9" viewBox="0 0 20 18"><g fill="none" stroke="#bdbdbd" stroke-width="1.500"><path d="M1 5V2.500a1.500 1.500 0 0 1 1.500-1.500H5M15 1h2.500a1.500 1.500 0 0 1 1.500 1.500V5M19 13v2.500a1.500 1.500 0 0 1-1.500 1.500H15M5 17H2.500a1.500 1.500 0 0 1-1.500-1.500V13"/><circle cx="10" cy="9" r="4.200"/><path d="M8 9.500l1.500 1.500 2.500-3"/></g></svg>
  <svg style="left:412px;top:4.500px" width="10" height="8" viewBox="0 0 20 16"><g fill="none" stroke="#bdbdbd" stroke-width="1.500"><path d="M1 0v16"/><rect x="4" y="2" width="13" height="4.500" rx=".8"/><rect x="4" y="9.500" width="15" height="4.500" rx=".8"/></g></svg>
  <svg style="left:428.500px;top:4.500px" width="10" height="8" viewBox="0 0 20 16"><g fill="none" stroke="#bdbdbd" stroke-width="1.500"><path d="M1 0v16M19 0v16M1 8h4M15 8h4"/><rect x="5.500" y="3.500" width="9" height="9" rx=".8"/></g></svg>
  <svg style="left:445.500px;top:4.500px" width="10" height="8" viewBox="0 0 20 16"><g fill="none" stroke="#bdbdbd" stroke-width="1.500"><path d="M1 0v16M19 0v16M1 8h4M15 8h4"/><path d="M10 3l4.500 9.500h-9z" stroke-linejoin="round"/></g></svg>
  <svg style="left:465px;top:4px" width="10" height="9" viewBox="0 0 20 18"><g fill="none" stroke="#bdbdbd" stroke-width="1.500"><path d="M7 2H2.500A1.500 1.500 0 0 0 1 3.500v11A1.500 1.500 0 0 0 2.500 16h15a1.500 1.500 0 0 0 1.500-1.500v-11A1.500 1.500 0 0 0 17.500 2H13"/><path d="M10 0v10M6.500 7l3.500 3.500L13.500 7"/><path d="M4 13h12"/></g></svg>
 </div>
 <div id="div2" class="abs"></div>
 <div id="insp" class="abs">

  <!-- inspector tabs -->
  <svg style="left:22px;top:5.6px" width="7.500" height="9" viewBox="0 0 15 18"><path d="M1 1h8l5 5v11H1z" fill="none" stroke="#8a8a8d" stroke-width="1.500" stroke-linejoin="round"/><path d="M9 1v5h5" fill="none" stroke="#8a8a8d" stroke-width="1.500"/></svg>
  <svg style="left:40px;top:5.6px" width="9" height="9" viewBox="0 0 18 18"><circle cx="9" cy="9" r="7.500" fill="none" stroke="#8a8a8d" stroke-width="1.500"/><path d="M9 4.500V9.500L6.500 11.500" fill="none" stroke="#8a8a8d" stroke-width="1.500"/></svg>
  <svg style="left:59.500px;top:5.6px" width="9" height="9" viewBox="0 0 18 18"><circle cx="9" cy="9" r="7.500" fill="none" stroke="#8a8a8d" stroke-width="1.500"/><path d="M6.500 7a2.500 2.500 0 1 1 3.500 2.300c-.8.400-1 .9-1 1.700" fill="none" stroke="#8a8a8d" stroke-width="1.400"/><circle cx="9" cy="13.300" r=".9" fill="#8a8a8d"/></svg>
  <svg style="left:78px;top:6.1px" width="10" height="8" viewBox="0 0 20 16"><rect x=".8" y=".8" width="18.400" height="14.400" rx="1.500" fill="#5e5e61" stroke="#6a6a6d" stroke-width="1.200"/><rect x="3" y="3.500" width="5" height="4" fill="#2c2d30"/><path d="M10 4h7M10 7h7M3 11h14" stroke="#2c2d30" stroke-width="1.400"/></svg>
  <svg style="left:97px;top:5.1px" width="10" height="10" viewBox="0 0 20 20"><path d="M6.500 1.500h7v5h5l-8.500 10.500-8.500-10.500h5z" fill="none" stroke="#2a8cf7" stroke-width="2.600" stroke-linejoin="round"/></svg>
  <svg style="left:119px;top:5.1px" width="5.500" height="10" viewBox="0 0 11 20"><rect x=".8" y=".8" width="9.400" height="18.400" rx="1" fill="#5e5e61" stroke="#6a6a6d" stroke-width="1.200"/><path d="M6 4h4M6 7.500h4M6 11h4M6 14.500h4" stroke="#2c2d30" stroke-width="1.200"/></svg>
  <svg style="left:136px;top:5.6px" width="9" height="9" viewBox="0 0 18 18"><circle cx="9" cy="9" r="7.500" fill="none" stroke="#8a8a8d" stroke-width="1.500"/><path d="M4.500 9h8.500M10 6l3 3-3 3" fill="none" stroke="#8a8a8d" stroke-width="1.500"/></svg>
  <div class="abs" style="left:0;top:18.500px;width:167px;height:1px;background:#1e1f21"></div>
  <span class="t" style="left:3px;top:21.800px;font-weight:bold;font-size:7.200px;color:#f2f2f2">View</span>
  <span class="t" style="left:3px;top:85.800px;font-weight:bold;font-size:7.200px;color:#b8b8ba">View</span>
  <span class="t lab" style="top:37px">Corner Radius</span><div class="fld" style="left:54px;top:35px;width:100.5px"><span class="t" style="right:3px;top:2px;color:#7d7e82;letter-spacing:.8px">--</span></div><div class="stp" style="left:156px;top:35px"><svg style="left:.9px;top:1.800px" width="3.600" height="7.400" viewBox="0 0 36 74"><path d="M4 26L18 8l14 18M4 48l14 18 14-18" fill="none" stroke="#e9e9e9" stroke-width="8"/></svg></div>
  <span class="t lab" style="top:54.5px">Border Color</span><div class="pop" style="top:53px;height:10px"><b style="background:#fff"><svg style="left:0;top:0" width="18" height="5" viewBox="0 0 18 5"><path d="M0 5L18 0" stroke="#f03a30" stroke-width=".7"/></svg></b><span>Default</span><i><svg style="left:2.500px;top:1.800px" width="4" height="6.400" viewBox="0 0 40 64"><path d="M5 22L20 6l15 16M5 42l15 16 15-16" fill="none" stroke="#fff" stroke-width="8"/></svg></i></div>
  <span class="t lab" style="top:69.5px">Border Width</span><div class="fld" style="left:54px;top:67.3px;width:100.5px"><span class="t" style="right:3px;top:2px;color:#7d7e82;letter-spacing:.8px">--</span></div><div class="stp" style="left:156px;top:67.3px"><svg style="left:.9px;top:1.800px" width="3.600" height="7.400" viewBox="0 0 36 74"><path d="M4 26L18 8l14 18M4 48l14 18 14-18" fill="none" stroke="#e9e9e9" stroke-width="8"/></svg></div>
  <div class="sep" style="top:84.5px"></div>
  <div class="abs" style="left:1px;top:30px;width:166.300px;height:60.500px;border:5px solid #fc2b1c"></div>
  <span class="t lab" style="top:100px">Content Mode</span><div class="pop" style="top:98.5px;height:10px"><span style="left:5.500px">Scale To Fill</span><i><svg style="left:2.500px;top:1.800px" width="4" height="6.400" viewBox="0 0 40 64"><path d="M5 22L20 6l15 16M5 42l15 16 15-16" fill="none" stroke="#fff" stroke-width="8"/></svg></i></div>
  <span class="t lab" style="top:114.5px">Semantic</span><div class="pop" style="top:113px;height:10px"><span style="left:5.500px">Unspecified</span><i><svg style="left:2.500px;top:1.800px" width="4" height="6.400" viewBox="0 0 40 64"><path d="M5 22L20 6l15 16M5 42l15 16 15-16" fill="none" stroke="#fff" stroke-width="8"/></svg></i></div>
  <span class="t lab" style="top:129px">Tag</span><div class="fld" style="left:54px;top:127.4px;width:100.5px"><span class="t" style="right:3px;top:2px;color:#f0f0f0">0</span></div><div class="stp" style="left:156px;top:127.4px"><svg style="left:.9px;top:1.800px" width="3.600" height="7.400" viewBox="0 0 36 74"><path d="M4 26L18 8l14 18M4 48l14 18 14-18" fill="none" stroke="#e9e9e9" stroke-width="8"/></svg></div>
  <div class="sep" style="top:142px"></div>
  <span class="t lab" style="top:146.2px">Interaction</span><div class="cb on" style="top:146px"><svg style="left:1px;top:1px" width="5.200" height="5.200" viewBox="0 0 52 52"><path d="M8 28l12 13L44 9" fill="none" stroke="#fff" stroke-width="9" stroke-linecap="round" stroke-linejoin="round"/></svg></div><span class="t" style="left:65px;top:146.2px">User Interaction Enabled</span>
  <div class="cb" style="top:157.7px"></div><span class="t" style="left:65px;top:157.89999999999998px">Multiple Touch</span>
  <div class="sep" style="top:168.3px"></div>
  <span class="t lab" style="top:174.2px">Alpha</span><div class="fld" style="left:54px;top:172.6px;width:100.5px"><span class="t" style="right:3px;top:2px;color:#f0f0f0">1</span></div><div class="stp" style="left:156px;top:172.6px"><svg style="left:.9px;top:1.800px" width="3.600" height="7.400" viewBox="0 0 36 74"><path d="M4 26L18 8l14 18M4 48l14 18 14-18" fill="none" stroke="#e9e9e9" stroke-width="8"/></svg></div>
  <svg style="left:3.500px;top:189.5px" width="5" height="5" viewBox="0 0 5 5"><path d="M2.500 0v5M0 2.500h5" stroke="#b5b5b8" stroke-width=".8" fill="none"/></svg><span class="t lab" style="top:188.6px">Background</span><div class="pop" style="top:187.3px;height:9.5px"><b style="background:#5ac8fa"></b><span>System Teal Color</span><i><svg style="left:2.500px;top:1.800px" width="4" height="6.400" viewBox="0 0 40 64"><path d="M5 22L20 6l15 16M5 42l15 16 15-16" fill="none" stroke="#fff" stroke-width="8"/></svg></i></div>
  <svg style="left:3.500px;top:203.5px" width="5" height="5" viewBox="0 0 5 5"><path d="M2.500 0v5M0 2.500h5" stroke="#b5b5b8" stroke-width=".8" fill="none"/></svg><span class="t lab" style="top:202.6px">Tint</span><div class="pop" style="top:201.3px;height:9.5px"><b style="background:#0a7aff"></b><span>Default</span><i><svg style="left:2.500px;top:1.800px" width="4" height="6.400" viewBox="0 0 40 64"><path d="M5 22L20 6l15 16M5 42l15 16 15-16" fill="none" stroke="#fff" stroke-width="8"/></svg></i></div>
  <div class="sep" style="top:215.5px"></div>
  <span class="t lab" style="top:220px">Drawing</span><div class="cb on" style="top:219.7px"><svg style="left:1px;top:1px" width="5.200" height="5.200" viewBox="0 0 52 52"><path d="M8 28l12 13L44 9" fill="none" stroke="#fff" stroke-width="9" stroke-linecap="round" stroke-linejoin="round"/></svg></div><span class="t" style="left:65px;top:219.89999999999998px">Opaque</span>
  <svg style="left:3.500px;top:232px" width="5" height="5" viewBox="0 0 5 5"><path d="M2.500 0v5M0 2.500h5" stroke="#b5b5b8" stroke-width=".8" fill="none"/></svg><div class="cb" style="top:231.1px"></div><span class="t" style="left:65px;top:231.29999999999998px">Hidden</span>
  <div class="cb on" style="top:242.7px"><svg style="left:1px;top:1px" width="5.200" height="5.200" viewBox="0 0 52 52"><path d="M8 28l12 13L44 9" fill="none" stroke="#fff" stroke-width="9" stroke-linecap="round" stroke-linejoin="round"/></svg></div><span class="t" style="left:65px;top:242.89999999999998px">Clears Graphics Context</span>
  <div class="cb" style="top:254.1px"></div><span class="t" style="left:65px;top:254.29999999999998px">Clip to Bounds</span>
  <div class="cb on" style="top:265.8px"><svg style="left:1px;top:1px" width="5.200" height="5.200" viewBox="0 0 52 52"><path d="M8 28l12 13L44 9" fill="none" stroke="#fff" stroke-width="9" stroke-linecap="round" stroke-linejoin="round"/></svg></div><span class="t" style="left:65px;top:266.0px">Autoresize Subviews</span>
  <div class="sep" style="top:276px"></div>
  <span class="t lab" style="top:282.700px">Stretching</span><div class="fld" style="left:54px;top:280px;width:43.3px"><span class="t" style="right:3px;top:2px;color:#f0f0f0">0</span></div><div class="stp" style="left:98.7px;top:280px"><svg style="left:.9px;top:1.800px" width="3.600" height="7.400" viewBox="0 0 36 74"><path d="M4 26L18 8l14 18M4 48l14 18 14-18" fill="none" stroke="#e9e9e9" stroke-width="8"/></svg></div><div class="fld" style="left:110.3px;top:280px;width:44px"><span class="t" style="right:3px;top:2px;color:#f0f0f0">0</span></div><div class="stp" style="left:156px;top:280px"><svg style="left:.9px;top:1.800px" width="3.600" height="7.400" viewBox="0 0 36 74"><path d="M4 26L18 8l14 18M4 48l14 18 14-18" fill="none" stroke="#e9e9e9" stroke-width="8"/></svg></div>
  <span class="t" style="left:72.500px;top:292px">X</span><span class="t" style="left:129.500px;top:292px">Y</span>
  <div class="fld" style="left:54px;top:303.2px;width:43.3px"><span class="t" style="right:3px;top:2px;color:#f0f0f0">1</span></div><div class="stp" style="left:98.7px;top:303.2px"><svg style="left:.9px;top:1.800px" width="3.600" height="7.400" viewBox="0 0 36 74"><path d="M4 26L18 8l14 18M4 48l14 18 14-18" fill="none" stroke="#e9e9e9" stroke-width="8"/></svg></div><div class="fld" style="left:110.3px;top:303.2px;width:44px"><span class="t" style="right:3px;top:2px;color:#f0f0f0">1</span></div><div class="stp" style="left:156px;top:303.2px"><svg style="left:.9px;top:1.800px" width="3.600" height="7.400" viewBox="0 0 36 74"><path d="M4 26L18 8l14 18M4 48l14 18 14-18" fill="none" stroke="#e9e9e9" stroke-width="8"/></svg></div>
  <span class="t" style="left:65.500px;top:315px">Width</span><span class="t" style="left:121.500px;top:315px">Height</span>
  <div class="sep" style="top:326.2px"></div>
  <svg style="left:3.500px;top:331.3px" width="5" height="5" viewBox="0 0 5 5"><path d="M2.500 0v5M0 2.500h5" stroke="#b5b5b8" stroke-width=".8" fill="none"/></svg><div class="cb on" style="top:330.1px"><svg style="left:1px;top:1px" width="5.200" height="5.200" viewBox="0 0 52 52"><path d="M8 28l12 13L44 9" fill="none" stroke="#fff" stroke-width="9" stroke-linecap="round" stroke-linejoin="round"/></svg></div><span class="t" style="left:65px;top:330.3px">Installed</span>
  <div class="sep" style="top:347.500px;left:0;width:167px"></div>
 </div>
</div>

<!-- ================= DOCK ================= -->
<div id="dock" class="abs"></div>
<div id="dockicons" class="abs" style="left:0;top:0;width:825px;height:516px;overflow:hidden;will-change:transform">
 <svg style="left:0;top:.6px" width="825" height="516" viewBox="0 0 825 516">
  <defs>
   <linearGradient id="gFinderL" x1="0" y1="0" x2="0" y2="1"><stop offset="0" stop-color="#38c3fc"/><stop offset="1" stop-color="#1b85f0"/></linearGradient>
   <linearGradient id="gFinderR" x1="0" y1="0" x2="0" y2="1"><stop offset="0" stop-color="#f4f7fb"/><stop offset="1" stop-color="#d5dde9"/></linearGradient>
   <linearGradient id="gLaunch" x1="0" y1="0" x2="0" y2="1"><stop offset="0" stop-color="#cfd0d2"/><stop offset="1" stop-color="#808285"/></linearGradient>
   <linearGradient id="gSafari" x1="0" y1="0" x2="0" y2="1"><stop offset="0" stop-color="#1fc6fb"/><stop offset="1" stop-color="#1a63e6"/></linearGradient>
   <linearGradient id="gGreen" x1="0" y1="0" x2="0" y2="1"><stop offset="0" stop-color="#5ff073"/><stop offset="1" stop-color="#18b53a"/></linearGradient>
   <linearGradient id="gStore" x1="0" y1="0" x2="0" y2="1"><stop offset="0" stop-color="#1ec0fc"/><stop offset="1" stop-color="#1565ec"/></linearGradient>
   <linearGradient id="gPrefs" x1="0" y1="0" x2="0" y2="1"><stop offset="0" stop-color="#b9bbbe"/><stop offset="1" stop-color="#86888c"/></linearGradient>
   <linearGradient id="gXcode" x1="0" y1="0" x2="0" y2="1"><stop offset="0" stop-color="#56b8fa"/><stop offset="1" stop-color="#2487ee"/></linearGradient>
   <radialGradient id="gQT" cx=".5" cy=".45" r=".55"><stop offset="0" stop-color="#4ab8ff"/><stop offset="1" stop-color="#0e5fd8"/></radialGradient>
   <linearGradient id="gQTr" x1="0" y1="0" x2="0" y2="1"><stop offset="0" stop-color="#6a6d73"/><stop offset="1" stop-color="#2c2e33"/></linearGradient>
   <linearGradient id="gTrash" x1="0" y1="0" x2="1" y2="0"><stop offset="0" stop-color="#5b5f67"/><stop offset=".45" stop-color="#8d9198"/><stop offset=".7" stop-color="#7a7e86"/><stop offset="1" stop-color="#545860"/></linearGradient>
   <clipPath id="cFinder"><rect x="95.200" y="477.600" width="29.100" height="27.200" rx="3.200"/></clipPath>
  </defs>

  <!-- Finder -->
  <g clip-path="url(#cFinder)">
   <rect x="95" y="477" width="30" height="28" fill="url(#gFinderL)"/>
   <path d="M110.700 477h14.300v28h-13.200c-.7-3.600-1.100-7-1.200-10.300h-3.800c.2-6.500 1.500-12.500 3.900-17.700z" fill="url(#gFinderR)"/>
   <path d="M110.700 477c-2.400 5.200-3.700 11.200-3.900 17.700h3.800c.1 3.300.5 6.700 1.200 10.300" fill="none" stroke="#1e3f66" stroke-width=".5" opacity=".7"/>
   <path d="M101.400 494.600c4.800 5.200 12.400 5.200 17.200 0" fill="none" stroke="#17345c" stroke-width="1" stroke-linecap="round"/>
   <path d="M103.400 484.300v3.200M116.400 484.300v3.200" stroke="#17345c" stroke-width="1" stroke-linecap="round"/>
  </g>

  <!-- Launchpad -->
  <circle cx="148" cy="491" r="15.700" fill="#e2e3e5"/>
  <circle cx="148" cy="491" r="14.500" fill="url(#gLaunch)"/>
  <g transform="translate(148.500 490.500) rotate(42) scale(1.300)" fill="#45474b">
   <path d="M0-10.500c3 2.500 4 6 4 9.500v5h-8v-5c0-3.500 1-7 4-9.500z"/>
   <path d="M-4 0l-3.500 4.500v3l3.500-2zM4 0l3.500 4.500v3L4 5.500z"/>
   <path d="M-2 5h4l-.7 3.500h-2.600z"/>
   <circle cx="0" cy="-4" r="1.400" fill="#b9bbbf"/>
  </g>

  <!-- Safari -->
  <circle cx="186.100" cy="491" r="15.700" fill="#eef0f3"/>
  <circle cx="186.100" cy="491" r="14" fill="url(#gSafari)"/>
  <circle cx="186.100" cy="491" r="12.300" fill="none" stroke="#d7ecff" stroke-width="1.600" stroke-dasharray=".5 1.400" opacity=".8"/>
  <path d="M196.100 481l-8.200 11.800-3.500-3.500z" fill="#ff3b30"/>
  <path d="M176.100 501l8.300-11.700 3.500 3.500z" fill="#f2f2f2"/>

  <!-- Photos -->
  <circle cx="224" cy="491" r="15.700" fill="#f6f6f6"/>
  <g transform="translate(224 491)" opacity=".88">
   <ellipse cx="0" cy="-7.300" rx="4.300" ry="6.600" fill="#f9a21d"/>
   <ellipse cx="0" cy="-7.300" rx="4.300" ry="6.600" fill="#f0d530" transform="rotate(45)"/>
   <ellipse cx="0" cy="-7.300" rx="4.300" ry="6.600" fill="#9bcc3c" transform="rotate(90)"/>
   <ellipse cx="0" cy="-7.300" rx="4.300" ry="6.600" fill="#44b98a" transform="rotate(135)"/>
   <ellipse cx="0" cy="-7.300" rx="4.300" ry="6.600" fill="#3f9ee0" transform="rotate(180)"/>
   <ellipse cx="0" cy="-7.300" rx="4.300" ry="6.600" fill="#7b6cc9" transform="rotate(225)"/>
   <ellipse cx="0" cy="-7.300" rx="4.300" ry="6.600" fill="#c86bb4" transform="rotate(270)"/>
   <ellipse cx="0" cy="-7.300" rx="4.300" ry="6.600" fill="#ee5a4e" transform="rotate(315)"/>
  </g>

  <!-- FaceTime -->
  <rect x="246.300" y="478" width="23" height="24.800" rx="4.500" fill="url(#gGreen)"/>
  <rect x="250.500" y="484.300" width="13.500" height="10.800" rx="2.200" fill="#eef3ee"/>
  <path d="M265 488l4-2.600v8.800l-4-2.600z" fill="#eef3ee"/>
  <circle cx="269.900" cy="496" r="7.300" fill="#f4f6f4"/>
  <path d="M266.600 492.500c-.8 1.700.2 4 1.900 5.600 1.700 1.700 3.900 2.600 5.500 1.800l.7-1.200-2-1.600-1 .7c-1-.4-2.300-1.700-2.700-2.800l.7-1-1.700-2z" fill="#2ec24a"/>
  <circle cx="273.400" cy="480.300" r="6.400" fill="#f03e37"/>

  <!-- App Store -->
  <circle cx="300" cy="491" r="15.700" fill="url(#gStore)"/>
  <g fill="none" stroke="#fff" stroke-width="2.200" stroke-linecap="round">
   <path d="M301.300 481.500l-8.800 15.500"/><path d="M299 481.500l8.800 15.500"/><path d="M290.300 493.800h19.400"/>
  </g>
  <circle cx="311.900" cy="480.300" r="6.400" fill="#f03e37"/>

  <!-- Chrome -->
  <circle cx="337.7" cy="491.0" r="15.7" fill="#e33b2e"/>
  <path d="M337.7 491.0L331.55 494.55L324.55 482.42A15.7 15.7 0 0 1 351.70 483.90L337.70 483.90z" fill="#e33b2e"/>
  <path d="M337.7 491.0L337.70 483.90L351.70 483.90A15.7 15.7 0 0 1 336.85 506.68L343.85 494.55z" fill="#fbc116"/>
  <path d="M337.7 491.0L343.85 494.55L336.85 506.68A15.7 15.7 0 0 1 324.55 482.42L331.55 494.55z" fill="#2da94f"/>
  <circle cx="337.7" cy="491.0" r="7.300" fill="#f4f4f4"/>
  <circle cx="337.7" cy="491.0" r="5.800" fill="#4787f3"/>

  <!-- Skype -->
  <circle cx="370.800" cy="485.500" r="8.800" fill="#1293dc"/>
  <circle cx="381.300" cy="496.800" r="8.800" fill="#1293dc"/>
  <circle cx="376" cy="491" r="13.300" fill="#14a6ea"/>

  <!-- Notes -->
  <g transform="rotate(-10.500 414.400 490.600)">
   <rect x="402.400" y="476.600" width="24" height="28" rx="1" fill="#fbfaf4"/>
   <path d="M402.400 477.600a1 1 0 0 1 1-1h22a1 1 0 0 1 1 1v4.600h-24z" fill="#f8d440"/>
   <path d="M402.400 482.200h24" stroke="#d9b21e" stroke-width=".5"/>
   <path d="M404 485.500h21M404 488h21M404 490.500h21M404 493h21M404 495.500h21M404 498h21M404 500.500h21M404 503h21" stroke="#dcd9cd" stroke-width=".45"/>
  </g>

  <!-- System Preferences -->
  <rect x="436.900" y="476.600" width="30.600" height="29" rx="1.500" fill="url(#gPrefs)"/>
  <circle cx="452.200" cy="491" r="11.600" fill="none" stroke="#34363a" stroke-width="2.400" stroke-dasharray="1.300 1.130"/>
  <circle cx="452.200" cy="491" r="9.600" fill="#86888c" stroke="#34363a" stroke-width="2.600"/>
  <g stroke="#34363a" stroke-width="2.300" stroke-linecap="butt"><path d="M452.200 491v-9"/><path d="M452.200 491l7.800 4.500"/><path d="M452.200 491l-7.800 4.500"/></g>
  <circle cx="452.200" cy="491" r="2.300" fill="#34363a"/>

  <!-- Xcode -->
  <g transform="rotate(-11 489 492)">
   <rect x="474.500" y="479.500" width="28.500" height="26" rx="2" fill="url(#gXcode)"/>
   <g fill="none" stroke="#c9e8ff" stroke-width=".8" opacity=".8"><path d="M489 483.500l-6.500 16.500M489 483.500l6.500 16.500M484.500 494.500h9"/><path d="M477.500 502.500h22" stroke-width=".5"/><path d="M486 483.500l-6.500 16.500M492 483.500l6.500 16.500" stroke-width=".35"/></g>
  </g>
  <g transform="translate(-1.800 0) rotate(16 497.500 492)">
   <rect x="496" y="481" width="3.200" height="25.500" rx="1.400" fill="#1d1e21"/>
   <rect x="495.700" y="479.500" width="3.800" height="3.200" fill="#9a9da2"/>
   <path d="M488.500 478.300c2.500-2 6-2.600 9-2.600h4.500c2.500 0 4.500.8 6 2.600l-1.200 1.600c-1.400-1-2.900-1.400-4.800-1.400h-1.500v1.500h-6.500v-2c-2 0-3.600.4-5 1.400z" fill="#d5d8dc"/>
  </g>

  <!-- separators -->
  <rect x="518" y="476" width="1" height="33.500" fill="#3a4258"/>
  <rect x="649" y="476" width="1" height="33.500" fill="#3a4258"/>

  <!-- QuickTime -->
  <circle cx="545.700" cy="491" r="15.600" fill="url(#gQTr)"/>
  <circle cx="545.700" cy="491" r="10" fill="url(#gQT)"/>
  <path d="M547 492l11.500 11.800" stroke="#4b4e54" stroke-width="5" stroke-linecap="round" fill="none"/>
  <path d="M556 501l3.500 3.600" stroke="#33353a" stroke-width="5" stroke-linecap="butt" fill="none"/>

  <!-- Excel -->
  <rect x="575.500" y="477.600" width="23.500" height="27.200" rx="1.800" fill="#1e9c58"/>
  <rect x="587.200" y="477.600" width="11.800" height="6.800" fill="#35c481"/>
  <rect x="575.500" y="477.600" width="11.700" height="6.800" fill="#23a566"/>
  <rect x="587.200" y="484.400" width="11.800" height="6.800" fill="#1f9e5a"/>
  <rect x="575.500" y="484.400" width="11.700" height="6.800" fill="#117e43"/>
  <rect x="587.200" y="491.200" width="11.800" height="6.800" fill="#16814a"/>
  <rect x="575.500" y="491.200" width="11.700" height="13.600" fill="#0f6a38"/>
  <rect x="587.200" y="498" width="11.800" height="6.800" fill="#107c41"/>
  <rect x="567.700" y="483.300" width="15.800" height="15.800" rx="1.600" fill="#0f7a40"/>

  <!-- Preview -->
  <g transform="rotate(4 622 488)">
   <rect x="609" y="477.500" width="26" height="21" fill="#f4efe4"/>
   <rect x="610.300" y="478.800" width="23.400" height="18.400" fill="#b9935e"/>
   <path d="M610.300 486c5-2 9 1 14-.5s6-1 9.400 0v11.700h-23.400z" fill="#d8bd8c"/>
  </g>
  <g transform="rotate(-9 619 491)">
   <rect x="606.500" y="480.500" width="25" height="22" fill="#f6f3ec"/>
   <rect x="608" y="482" width="22" height="19" fill="#7fb5e8"/>
   <path d="M608 491.500c4-1.500 8 1 12-.5s6-1 10 0v10h-22z" fill="#edf2f7"/>
   <path d="M608 494.500c5-1 9 1.500 13 .5s6-.5 9 .5v5.500h-22z" fill="#4a7db3"/>
   <path d="M608 498.500c5-.8 8 .8 12 .3s6 0 10 .7v1.500h-22z" fill="#c9b79a"/>
  </g>
  <rect x="624" y="496" width="12.500" height="10.500" rx="2.500" fill="#6e655d"/>
  <circle cx="630.200" cy="494.500" r="6.400" fill="#e3e7ea" stroke="#4f4842" stroke-width="1.500" opacity=".96"/>
  <ellipse cx="630.200" cy="497.800" rx="5.500" ry="2.500" fill="#b9ab98" opacity=".9"/>

  <!-- xlsx stack -->
  <rect x="667" y="474.200" width="20.500" height="20" rx=".8" fill="#f6f6f6" stroke="#c9c9c9" stroke-width=".3"/>
  <rect x="668.500" y="475.700" width="17.500" height="9" fill="#9cc7b5"/>
  <path d="M668.500 481c3-2 6 0 9-1.500s5-1 8.500 0v5.200h-17.500z" fill="#dfeee6"/>
  <path d="M680 478l3-2.300 3 1.500v5h-6z" fill="#5c6b62"/>
  <path d="M661.800 481.400h24.700c3.500 0 5.500 2 5.500 5.500v16.600h-30.200z" fill="#fcfcfc" stroke="#c6c6c6" stroke-width=".3"/>
  <path d="M684.500 481.400c1.500 1 1.500 3.500.5 5.500 2.500-1 5.500-.5 7 1.500 0-4.500-2.500-7-7.500-7z" fill="#dcdcdc"/>
  <g fill="#c3c7cd"><rect x="664.500" y="483.500" width="5" height="1.100"/><rect x="664.500" y="485.700" width="5" height="1.100"/><rect x="664.500" y="487.900" width="4" height="1.100"/><rect x="671" y="483.500" width="4" height="1.100"/><rect x="677" y="483.500" width="5" height="1.100"/><rect x="664.500" y="491.500" width="5" height="1"/><rect x="664.500" y="493.500" width="5" height="1"/><rect x="664.500" y="496" width="6" height="1.300"/><rect x="672" y="491.500" width="8" height="5.500" opacity=".5"/></g>
  <path d="M673.300 490.300l2.500-4.500 2.500 4.500z" fill="#f5a623"/>
  <path d="M684 488l1.500 4 1.500-3 1.500 5 1.500-2.500" fill="none" stroke="#e0685f" stroke-width=".5"/>
  <path d="M684 493.500l2-1.500 2 2.500 2.500-3" fill="none" stroke="#6aa6d6" stroke-width=".45"/>

  <!-- Trash -->
  <path d="M702.600 480.500h25l-3 24.300c-.2 1.700-1.200 2.400-2.600 2.600-4.500.5-9.500.5-13.800 0-1.400-.2-2.400-.9-2.600-2.600z" fill="url(#gTrash)" opacity=".82"/>
  <path d="M709 483c1 7 1.500 15 2 23" stroke="#c3c7cd" stroke-width=".8" opacity=".25" fill="none"/>
  <ellipse cx="715.100" cy="480.200" rx="12.700" ry="3" fill="#9a9ea5"/>
  <ellipse cx="715.100" cy="480.200" rx="11.300" ry="2.200" fill="#3f434a"/>
  <path d="M706 480.500l1.500-4.500 3.500 1.500 2-3.500 3.500 2.500 3-2.500 2.500 3.500 2.500-.5.500 3.500c-4 1.800-15 1.800-19 0z" fill="#eef0f2"/>
  <path d="M710.500 477.200l2.200 1.600" stroke="#3d8fe0" stroke-width="1.100"/><path d="M713.500 478.500l1.800-1.400" stroke="#3aa655" stroke-width="1.100"/><path d="M717.500 477l1.800 1.600" stroke="#d8493f" stroke-width="1.100"/><path d="M720.500 478.500l1.600-1" stroke="#7a4fc2" stroke-width="1"/>

  <!-- running dots -->
  <circle cx="110" cy="513" r="1" fill="#c9ccd4"/>
  <circle cx="337.700" cy="513" r="1" fill="#c9ccd4"/>
  <circle cx="489.900" cy="513" r="1" fill="#c9ccd4"/>

  <!-- glyph labels -->
  <text x="273.400" y="482.900" font-family="Liberation Sans, sans-serif" font-size="7.400" fill="#fff" text-anchor="middle">1</text>
  <text x="311.900" y="482.900" font-family="Liberation Sans, sans-serif" font-size="7.400" fill="#fff" text-anchor="middle">5</text>
  <text x="0" y="0" transform="translate(376 498.600) scale(.92 1)" font-family="Liberation Sans, sans-serif" font-size="21" font-weight="bold" fill="#fff" text-anchor="middle">S</text>
  <text x="575.600" y="495.500" font-family="Liberation Sans, sans-serif" font-size="11.500" font-weight="bold" fill="#fff" text-anchor="middle">X</text>
  <text x="676.800" y="502.300" font-family="Liberation Sans, sans-serif" font-size="3.900" fill="#6c6c6c" text-anchor="middle">XLSX</text>
 </svg>
</div>
</body>
</html>
